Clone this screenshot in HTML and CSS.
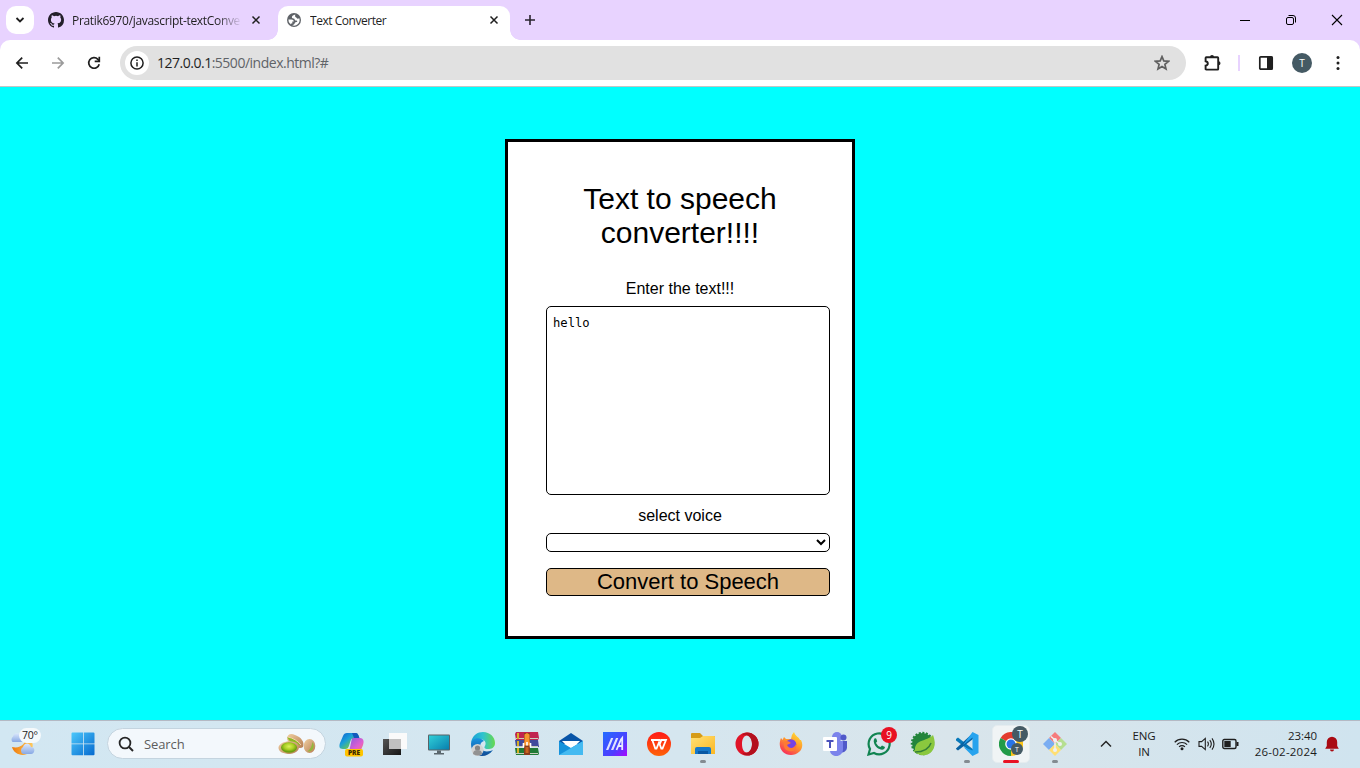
FILE: index.html
```
<!DOCTYPE html>
<html lang="en">
<head>
<meta charset="utf-8">
<title>Text Converter</title>
<link rel="stylesheet" href="styles.css">
</head>
<body>
<header class="tabstrip">
  <button class="tab-search"><svg width="10" height="10" viewBox="0 0 10 10"><path d="M1.500 3 5 6.500 8.500 3" fill="none" stroke="#1f1f1f" stroke-width="1.800"/></svg></button>
  <div class="tab">
    <svg class="favicon" width="16" height="16" viewBox="0 0 16 16"><path fill="#24202b" d="M8 0C3.580 0 0 3.580 0 8c0 3.540 2.290 6.530 5.470 7.590.4.070.550-.170.550-.380 0-.190-.010-.820-.010-1.490-2.010.370-2.530-.490-2.690-.940-.090-.230-.480-.940-.820-1.130-.280-.150-.680-.520-.010-.530.630-.010 1.080.580 1.230.820.720 1.210 1.870.870 2.330.660.070-.520.280-.870.510-1.070-1.780-.200-3.640-.890-3.640-3.950 0-.870.310-1.590.820-2.150-.080-.200-.360-1.020.080-2.120 0 0 .670-.210 2.200.820a7.600 7.600 0 0 1 4 0c1.530-1.040 2.200-.820 2.200-.820.440 1.100.160 1.920.080 2.120.510.560.820 1.270.820 2.150 0 3.070-1.870 3.750-3.650 3.950.290.250.540.730.540 1.480 0 1.070-.010 1.930-.010 2.200 0 .210.150.460.550.380A8.010 8.010 0 0 0 16 8c0-4.420-3.580-8-8-8z"/></svg>
    <span class="tab-title fade">Pratik6970/javascript-textConve</span>
    <svg class="tab-close" width="10" height="10" viewBox="0 0 10 10"><path d="m1.500 1.500 7 7m0-7-7 7" stroke="#1f1f1f" stroke-width="1.500"/></svg>
  </div>
  <div class="tab active">
    <svg class="favicon" width="14" height="14" viewBox="0 0 14 14"><circle cx="7" cy="7" r="7" fill="#5f6368"/><path d="M8.300 1.600C6.500 2 4.900 3 4.900 4.300c0 1.200 1.200 1.300 2.500 1.400.2 1.300.8 1.900 2 1.700 1 .1 1.300 1.200.2 1.500-1.500.1-2 .6-2 1.900-.6 1-1.700 1.200-2.400 1.500a5.600 5.600 0 0 0 7.100-7.100C11 6 10 5.800 9.600 4.700 8.300 4.500 7.800 3.600 8.300 1.600z" fill="#fff"/><path d="M1.400 6.500h3.100c1.500 0 2.200.7 2.300 2H5.300v1.900H3.800L3.700 11.500A5.600 5.600 0 0 1 1.400 6.500z" fill="#fff"/></svg>
    <span class="tab-title short">Text Converter</span>
    <svg class="tab-close" width="10" height="10" viewBox="0 0 10 10"><path d="m1.500 1.500 7 7m0-7-7 7" stroke="#1f1f1f" stroke-width="1.500"/></svg>
  </div>
  <svg class="new-tab" width="12" height="12" viewBox="0 0 12 12"><path d="M6 1v10M1 6h10" stroke="#28242f" stroke-width="1.600"/></svg>
  <div class="window-controls">
    <svg width="12" height="12" viewBox="0 0 12 12"><path d="M1 6.500h10" stroke="#000"/></svg>
    <svg width="12" height="12" viewBox="0 0 12 12"><rect x="1.500" y="3.500" width="7" height="7" rx="1.500" fill="none" stroke="#000"/><path d="M3.500 1.500H8a2.500 2.500 0 0 1 2.500 2.500v4.500" fill="none" stroke="#000"/></svg>
    <svg width="12" height="12" viewBox="0 0 12 12"><path d="m1 1 10 10M11 1 1 11" stroke="#000" stroke-width="1.100"/></svg>
  </div>
</header>

<nav class="toolbar">
  <div class="nav-buttons">
    <svg width="14" height="14" viewBox="0 0 14 14"><path d="M13 7H2m5.200-5.300L1.900 7l5.300 5.300" fill="none" stroke="#1f1f1f" stroke-width="1.700"/></svg>
    <svg width="14" height="14" viewBox="0 0 14 14"><path d="M1 7h11M6.800 1.700 12.100 7l-5.300 5.300" fill="none" stroke="#9b9b9b" stroke-width="1.700"/></svg>
    <svg width="14" height="14" viewBox="0 0 14 14"><path d="M12.200 8.200A5.300 5.300 0 1 1 10.900 3.300L12 4.600" fill="none" stroke="#1f1f1f" stroke-width="1.700"/><path d="M12.300.8v4.600H7.700" fill="none" stroke="#1f1f1f" stroke-width="1.700"/></svg>
  </div>
  <div class="omnibox">
    <span class="site-info"><svg width="14" height="14" viewBox="0 0 14 14"><circle cx="7" cy="7" r="6.100" fill="none" stroke="#1f1f1f" stroke-width="1.500"/><path d="M7 6.200v4.200M7 3.500v1.600" stroke="#1f1f1f" stroke-width="1.500"/></svg></span>
    <span class="url"><b>127.0.0.1</b>:5500/index.html?#</span>
    <svg class="star" width="16" height="16" viewBox="0 0 16 16"><path d="m8 1.600 1.800 4.300 4.700.4-3.600 3.100 1.100 4.600L8 11.500 4 14l1.100-4.600-3.600-3.100 4.700-.4z" fill="none" stroke="#606060" stroke-width="1.700"/></svg>
  </div>
  <div class="toolbar-actions">
    <svg width="18" height="18" viewBox="0 0 18 18"><path d="M2.300 3.200h11.200q.7 0 .7.700v11q0 .7-.7.700H2.300q-.7 0-.7-.7v-3.300q2.200-.4 2.200-2.200T1.600 7.200V3.900q0-.7.700-.7z" fill="none" stroke="#1f1f1f" stroke-width="1.900"/><path d="M6 3a2 2 0 0 1 4 0M14.500 7.300a2 2 0 0 1 0 4z" fill="#1f1f1f"/></svg>
    <i class="divider"></i>
    <svg class="panel" width="16" height="16" viewBox="0 0 16 16"><rect x="1.800" y="1.800" width="12.400" height="12.400" rx="1" fill="none" stroke="#1f1f1f" stroke-width="1.700"/><path d="M9 1.500h5.500v13H9z" fill="#1f1f1f"/></svg>
    <span class="avatar">T</span>
    <svg width="4" height="16" viewBox="0 0 4 16"><g fill="#1f1f1f"><circle cx="2" cy="2.600" r="1.500"/><circle cx="2" cy="8" r="1.500"/><circle cx="2" cy="13.400" r="1.500"/></g></svg>
  </div>
</nav>

<main class="page">
  <form class="converter">
    <h1>Text to speech converter!!!!</h1>
    <label for="text">Enter the text!!!</label>
    <textarea id="text" spellcheck="false">hello</textarea>
    <label for="voice">select voice</label>
    <select id="voice"></select>
    <button class="convert" type="button">Convert to Speech</button>
  </form>
</main>

<footer class="taskbar">
  <div class="weather">
    <svg width="32" height="30" viewBox="0 0 32 30"><defs><linearGradient id="moon" x2="1"><stop stop-color="#ef7b0a"/><stop offset="1" stop-color="#ffc95c"/></linearGradient><linearGradient id="cloud" y2="1" x2="0"><stop stop-color="#dce8fc"/><stop offset="1" stop-color="#87a8e4"/></linearGradient></defs><path d="M16 7c2 8-5 13-13 11 2 8 13 11 19 4 4-6 1-12-6-15z" fill="url(#moon)"/><path d="M3.500 13a3.700 3.700 0 0 1 .5-5.500C5 3 11 3 12 7.500c4 1 3 5.500 0 5.500z" fill="url(#cloud)"/><path d="M14 25a4 4 0 0 1 0-7c2-5 7-4 8 0 5 0 4 7 0 7z" fill="url(#cloud)"/></svg>
    <span class="temp">70°</span>
  </div>
  <svg class="start" width="24" height="24" viewBox="0 0 24 24"><defs><linearGradient id="win" x2="1" y2="1"><stop stop-color="#4cc8fb"/><stop offset="1" stop-color="#0569cf"/></linearGradient></defs><path fill="url(#win)" d="M1.500.5H12v11H.5v-10q0-1 1-1zM12.800.5h9.700q1 0 1 1v10H12.800zM.5 12.300H12v11H1.500q-1 0-1-1zM12.800 12.300h10.700v10q0 1-1 1h-9.700z"/></svg>
  <div class="search">
    <svg width="16" height="16" viewBox="0 0 16 16"><circle cx="7" cy="7" r="5.400" fill="none" stroke="#262626" stroke-width="1.800"/><path d="m11 11 4 4" stroke="#262626" stroke-width="2"/></svg>
    <span>Search</span>
    <svg class="nuts" width="38" height="22" viewBox="0 0 38 22"><defs><radialGradient id="nut" cy=".4"><stop stop-color="#dcf05a"/><stop offset=".6" stop-color="#a9cf24"/><stop offset="1" stop-color="#6c9f10"/></radialGradient><linearGradient id="shell" y2="1"><stop stop-color="#f0cfa2"/><stop offset="1" stop-color="#b57c50"/></linearGradient></defs><path d="M9 6C9 1 13 0 17 2c6 2 10 7 8 12-4 3-14-2-16-8z" fill="url(#shell)"/><path d="M9.500 4c4 0 10 4 13 8-6 0-12-3-13-8z" fill="#8dba24"/><path d="M10 4c5 1 10 4 13 8" fill="none" stroke="#f1d4a9"/><ellipse cx="31.500" cy="13" rx="5.800" ry="7" fill="url(#shell)"/><path d="M29.500 18.500c2.500-2 4.500-5 5-9.500 3 5 0 10-5 9.500z" fill="#91b83a"/><path d="M.5 14C2 8 15 6 20 11c3 5-1 9-8 10C6 21 0 19 .5 14z" fill="url(#shell)"/><ellipse cx="11" cy="14.500" rx="8" ry="5.200" fill="url(#nut)"/></svg>
  </div>
  <div class="apps">
    <span class="app"><svg width="26" height="26" viewBox="0 0 26 26"><defs><linearGradient id="coA" y2="1"><stop stop-color="#0d5ed2"/><stop offset=".4" stop-color="#1aa0d8"/><stop offset=".65" stop-color="#5cc06a"/><stop offset="1" stop-color="#ffd431"/></linearGradient><linearGradient id="coB" y2="1"><stop stop-color="#8b5ae0"/><stop offset=".6" stop-color="#e05fd0"/><stop offset="1" stop-color="#fb7f67"/></linearGradient></defs><path d="M14 7h8c4 0 4 4 3 7l-2 5q-1 2-3 2h-9z" fill="url(#coB)"/><path d="M9 2h8c3 0 3 1 4 5h-5c-2 0-3 1-3.500 3L10.500 16q-.7 2-3 2H5c-4 0-4-3-3-6l3-7q1-3 4-3z" fill="url(#coA)"/><path d="M14 2h3c3 0 3.500 2 4.500 5H16z" fill="#1358bd"/><rect x="7" y="18" width="18" height="7.500" rx="2" fill="#ffc400"/><text x="16" y="24.300" text-anchor="middle" class="pre">PRE</text></svg></span>
    <span class="app"><svg width="24" height="24" viewBox="0 0 24 24"><defs><linearGradient id="task" y2="1"><stop stop-color="#555"/><stop offset="1" stop-color="#161616"/></linearGradient></defs><path d="M0 7h18v16H0z" fill="url(#task)"/><path d="M6 1h18v16H6z" fill="#fafafa"/><path d="M6 7h12v10H6z" fill="#c0c0c0"/></svg></span>
    <span class="app"><svg width="24" height="24" viewBox="0 0 24 24"><defs><linearGradient id="screen" x2="1" y2="1"><stop stop-color="#30cfd8"/><stop offset="1" stop-color="#087fae"/></linearGradient></defs><rect x="1" y="2.500" width="22" height="16" rx="1" fill="#596267"/><path d="M2 3.500h20v14H2z" fill="url(#screen)"/><path d="M10 18.500h4V21h3v1.500H7V21h3z" fill="#5a666d"/></svg></span>
    <span class="app"><svg width="26" height="26" viewBox="0 0 26 26"><defs><linearGradient id="edgeA" x2="1"><stop stop-color="#199ed7"/><stop offset=".5" stop-color="#2fc3cf"/><stop offset="1" stop-color="#67d94e"/></linearGradient><linearGradient id="edgeB" y2="1" x2="0"><stop stop-color="#1994e1"/><stop offset="1" stop-color="#104c96"/></linearGradient></defs><path d="M1 12C2 4 8 1 13 1c7 0 12 5 12 11 0 5-4 6-7 6-4 0-4-2-3-3 2-4-1-7-5-7-4 0-7 1-9 4z" fill="url(#edgeA)"/><path d="M1 13c0-6 9-8 13-3-5 1-5 8 0 10 3 1 7 0 9-1-3 4-7 6-11 6C6 25 1 20 1 13z" fill="url(#edgeB)"/><circle cx="7.500" cy="19" r="6" fill="#d4d4d4"/><circle cx="7.500" cy="17" r="2.600" fill="#858585"/><path d="M3 23q0-4 4.500-4T12 23q-4 3-9 0z" fill="#929292"/></svg></span>
    <span class="app"><svg width="24" height="24" viewBox="0 0 24 24"><path d="M1 0h22l1 6-1 2H1L0 2z" fill="#c02450"/><path d="M0 8h23l1 7H1z" fill="#404b9c"/><path d="M0 16h23l1 6-1 1H1z" fill="#207a36"/><path d="M1 6.500h22M1 14.500h22M1 21.500h22" stroke="#c9cdbd"/><path d="M2 1h2v6H2zm0 8h2v5H2zm0 7h2v5H2z" fill="#d6af26"/><path d="M9 1h6v22H9z" fill="#8a3c1c"/><path d="M9.500 2.500 12 1l2.500 1.500v7l2 4H7.500l2-4z" fill="#f6952f"/><path d="M8.500 11v4.500M12 10v3.500M15.500 11v4.500" fill="none" stroke="#fff" stroke-width="1.600"/><path d="M10.500 15h3v6h-3z" fill="#c8641f"/></svg></span>
    <span class="app"><svg width="24" height="24" viewBox="0 0 24 24"><path d="M0 9 12 1l12 8v3H0z" fill="#0754a7"/><path d="M3 9h18l-9 9z" fill="#fff"/><path d="M0 9v14h24V9l-12 7z" fill="#1593dc"/><path d="m0 23 12-7 12-7v14z" fill="#44baf1"/></svg></span>
    <span class="app"><svg width="24" height="24" viewBox="0 0 24 24"><defs><linearGradient id="asus" x2="1" y2="1"><stop stop-color="#226dff"/><stop offset=".65" stop-color="#503bff"/><stop offset="1" stop-color="#aa08ff"/></linearGradient></defs><path d="M0 0h24v24H0z" fill="url(#asus)"/><path d="m3 18 5-12h2.300l-5 12zm5 0 5-12h2.300l-5 12z" fill="#dfe3ff"/><path d="M13.500 18 18 7.500l1.200-1.500V18m-3.700-4h3" fill="none" stroke="#e8eaff" stroke-width="1.800"/></svg></span>
    <span class="app"><svg width="24" height="24" viewBox="0 0 24 24"><defs><linearGradient id="wps" y2="1" x2="0"><stop stop-color="#ff1b16"/><stop offset="1" stop-color="#ff6208"/></linearGradient></defs><circle cx="12" cy="12" r="12" fill="url(#wps)"/><path d="M4 8h9.500M5.300 8l3 8.500h1.200L12 10.500l2.300 6h1.200L19 8h-4.500L12.800 12" fill="none" stroke="#fff" stroke-width="1.800"/></svg></span>
    <span class="app running"><svg width="24" height="24" viewBox="0 0 24 24"><defs><linearGradient id="folder" x2="1" y2="1"><stop stop-color="#ffe176"/><stop offset="1" stop-color="#fcb722"/></linearGradient></defs><path d="M1 1h8l3 3h11q1 0 1 1v5H0V2q0-1 1-1z" fill="#d69c18"/><path d="M0 6h9l3-2h11q1 0 1 1v17H0z" fill="url(#folder)"/><path d="M4 22v-5q0-2 2-2h12q2 0 2 2v5z" fill="#1678c9"/><path d="M7 19h10v3H7z" fill="#0858a4"/></svg></span>
    <span class="app"><svg width="24" height="24" viewBox="0 0 24 24"><path d="M12 .5a11.500 11.500 0 1 0 0 23 11.500 11.500 0 0 0 0-23zm0 3c3 0 5 3.500 5 8.500s-2 8.500-5 8.500-5-3.500-5-8.500 2-8.500 5-8.500z" fill="#e01428" fill-rule="evenodd"/><path d="M12 .5a11.500 11.500 0 0 1 0 23c-2 0-4-1-5-3 2 1 5 1 7-1 2-2 3-4 3-7.500S16 6.500 14 4.500c-2-2-5-2-7-1 1-2 3-3 5-3z" fill="#b3101e"/></svg></span>
    <span class="app"><svg width="24" height="24" viewBox="0 0 24 24"><defs><linearGradient id="fox" x1=".8" x2=".2" y2="1"><stop stop-color="#ffe135"/><stop offset=".45" stop-color="#ff9a2b"/><stop offset="1" stop-color="#f7255d"/></linearGradient></defs><path d="M2 6q1 1 1.500 2L5 5l2 2h5q0-4 3-7c1 4 5 5 6 8l1 0c4 8-2 15-10 15S-2 16 2 6z" fill="url(#fox)"/><circle cx="12" cy="12.500" r="5.300" fill="#7542e5"/><path d="M5 10c2-2 5-1 7 1l-4 2c2 4 7 4 9-1 1 5-2 8-6 7-5 0-7-4-6-9z" fill="#ff7a33"/></svg></span>
    <span class="app"><svg width="26" height="26" viewBox="0 0 26 26"><circle cx="15" cy="6" r="5" fill="#7b83eb"/><circle cx="21.500" cy="6.500" r="3" fill="#5059c9"/><path d="M18 10h7v7a5 5 0 0 1-7 4z" fill="#5059c9"/><path d="M8 10h13v8c0 9-12 9-13 2z" fill="#7b83eb"/><rect x="1" y="6" width="14" height="14" rx="1" fill="#fff"/><path d="M4.500 10h7M8 10v7" stroke="#4b53bc" stroke-width="2"/></svg></span>
    <span class="app"><svg width="24" height="24" viewBox="0 0 24 24"><path d="M1.500 22.500 3 17a10.500 10.500 0 1 1 4 4z" fill="none" stroke="#118451" stroke-width="2.200"/><path d="M7.500 6.500c2-1 2 1 2.700 2.700L9 11q1.500 3 4.500 4l1.500-1.400 3 1.500c-.5 3-3 3-5.500 2C9 16 5 10 7.500 6.500z" fill="#118451"/></svg><em class="count">9</em></span>
    <span class="app"><svg width="26" height="26" viewBox="0 0 26 26"><circle cx="12.500" cy="12.500" r="10.500" fill="#23853b" stroke="#23853b" stroke-width="2.500" stroke-dasharray="2 1.500"/><path d="M5 19C5 8 16 11 23 4c6 15-5 25-17 18-2-1-3-2-1-3z" fill="#8ac83e"/><path d="M5 21c8 0 14-3 16-9" fill="none" stroke="#337f38" stroke-width="1.500"/></svg></span>
    <span class="app running"><svg width="24" height="24" viewBox="0 0 24 24"><path d="m1 7 2-1.500L19 18v4L1 8.500z" fill="#0879ba"/><path d="M1 16.500 18 1v6L3 18.500 1 17z" fill="#0862a3"/><path d="m17.500 0 6 3v18l-6 3-9-9 9 3.500V5.500L8 13z" fill="#27a3ee"/></svg></span>
    <span class="app running current"><svg width="24" height="24" viewBox="0 0 24 24"><path d="M12 12 1.600 6A12 12 0 0 1 22.400 6z" fill="#e33b2e"/><path d="M12 12v12A12 12 0 0 1 1.600 6z" fill="#229b48"/><path d="M12 12 22.400 6A12 12 0 0 1 12 24z" fill="#fcc419"/><circle cx="12" cy="12" r="5.800" fill="#fff"/><circle cx="12" cy="12" r="4.500" fill="#2874e8"/></svg><em class="profile large">T</em><em class="profile">T</em></span>
    <span class="app running"><svg width="26" height="26" viewBox="0 0 26 26"><path d="m13 1 6 6-6 6-6-6z" fill="#f67b7c"/><path d="m7 7 6 6-6 6-6-6z" fill="#7aadf2"/><path d="m19 7 6 6-6 6-6-6z" fill="#b6df91"/><path d="m13 13 6 6-6 6-6-6z" fill="#ffdf73"/><path d="M9 5.500 13 9v11M13 9l5 4" fill="none" stroke="#eef1f2" stroke-width="1.500"/><g fill="#eef1f2"><circle cx="13" cy="9" r="2"/><circle cx="13" cy="19" r="2"/><circle cx="18" cy="13" r="2"/></g></svg></span>
  </div>
  <div class="tray">
    <svg class="chevron" width="12" height="8" viewBox="0 0 12 8"><path d="m1 6.500 5-5 5 5" fill="none" stroke="#262626" stroke-width="1.500"/></svg>
    <span class="lang">ENG<br>IN</span>
    <svg class="wifi" width="16" height="14" viewBox="0 0 16 14"><g fill="none" stroke="#1f1f1f" stroke-width="1.200"><path d="M.7 5.200a10.400 10.400 0 0 1 14.600 0M2.900 7.600a7.200 7.200 0 0 1 10.200 0M5.100 9.800a4.100 4.100 0 0 1 5.800 0"/></g><circle cx="8" cy="11.700" r="1.500" fill="#1f1f1f"/></svg>
    <svg class="sound" width="17" height="14" viewBox="0 0 17 14"><g fill="none" stroke="#1f1f1f" stroke-width="1.100"><path d="M1 4.600h2.600l3.700-3.200v11.200L3.600 9.400H1zM9.500 4.700q1.800 2.300 0 4.600M11.800 3.100q3 3.900 0 7.800M14 1.400q4 5.600 0 11.200"/></g></svg>
    <svg class="battery" width="17" height="12" viewBox="0 0 17 12"><rect x=".8" y="1.500" width="13.200" height="9" rx="1.500" fill="none" stroke="#1f1f1f" stroke-width="1.400"/><path d="M2.300 3h6.400v6H2.300zM14.500 4h2v4h-2z" fill="#1f1f1f"/></svg>
    <span class="clock">23:40<br><span class="date">26-02-2024</span></span>
    <svg class="bell" width="14" height="16" viewBox="0 0 14 16"><path d="M1.800 10V6a5.200 5.200 0 0 1 10.400 0v4l1.600 2.800H.2z" fill="#a90a12"/><path d="M5 13.500h4a2 2 0 0 1-4 0z" fill="#a90a12"/></svg>
  </div>
</footer>
</body>
</html>
```
FILE: styles.css
```
* { box-sizing: border-box; }
svg { display: block; flex: none; }

body {
  margin: 0;
  height: 768px;
  overflow: hidden;
  display: grid;
  grid-template-rows: 40px 47px 633px 48px;
  background: #e8d3ff;
  font-family: "Open Sans", "Noto Sans", sans-serif;
}

/* Tabs */
.tabstrip { display: flex; align-items: flex-end; padding-left: 6px; background: #e8d3ff; }
.tab-search {
  display: grid; place-items: center;
  width: 28px; height: 28px; margin-bottom: 6px; padding: 0;
  border: 0; border-radius: 10px; background: #fff;
}
.tab { display: flex; align-items: center; width: 244px; height: 34px; padding: 0 17px 6px 14px; }
.tab.active {
  position: relative; width: 232px; padding: 0 11px 6px 9px;
  border-radius: 10px 10px 0 0; background: #fff;
}
.tab.active::before, .tab.active::after {
  content: ""; position: absolute; bottom: 0; width: 10px; height: 10px;
}
.tab.active::before { left: -10px; background: radial-gradient(circle at 0 0, transparent 9.500px, #fff 10px); }
.tab.active::after { right: -10px; background: radial-gradient(circle at 100% 0, transparent 9.500px, #fff 10px); }
.tab-title { margin-left: 8px; width: 168px; padding-top: 1px; overflow: hidden; white-space: nowrap; color: #1f1f1f; font-size: 12px; line-height: 18px; letter-spacing: -0.320px; }
.tab-title.short { letter-spacing: -0.460px; margin-left: 9px; }
.fade { -webkit-mask-image: linear-gradient(to right, #000 145px, transparent 170px); mask-image: linear-gradient(to right, #000 145px, transparent 170px); }
.tab-close { margin-left: auto; }
.new-tab { margin: 0 0 14px 14px; }
.window-controls { display: flex; gap: 34px; margin: 0 17px 14px auto; }

/* Toolbar */
.toolbar {
  display: flex; align-items: center;
  border-bottom: 1px solid #c4c4c4; border-radius: 10px 10px 0 0;
  background: #fff;
}
.nav-buttons { display: flex; gap: 22px; padding-left: 15px; }
.omnibox {
  display: flex; align-items: center;
  width: 1066px; height: 34px; margin-left: 19px; padding: 0 16px 0 5px;
  border-radius: 17px; background: #e1e1e1;
}
.site-info { display: grid; place-items: center; width: 24px; height: 24px; border-radius: 50%; background: #fff; }
.url { margin-left: 8px; color: #5f6368; font-size: 14px; line-height: 20px; letter-spacing: -0.490px; }
.url b { color: #1f1f1f; font-weight: 400; }
.star { margin-left: auto; }
.toolbar-actions { display: flex; align-items: center; padding-left: 18px; }
.divider { width: 2px; height: 16px; margin: 0 18px 0 16px; background: #e8d3ff; }
.avatar {
  display: grid; place-items: center;
  width: 20px; height: 20px; margin: 0 24px 0 18px;
  border-radius: 50%; background: #455a64; color: #fff; font-size: 10px;
}

/* Converter page */
.page { padding-top: 52px; background: #0ff; }
.converter {
  display: flex; flex-direction: column;
  width: 350px; height: 500px; margin: 0 auto; padding: 40px 22px 0 38px;
  border: 3px solid #000; background: #fff;
  font-family: "Liberation Sans", Arial, sans-serif;
}
.converter h1 { margin: 0 16px 29px 0; font-size: 30px; font-weight: 400; line-height: 34px; text-align: center; }
.converter label { margin-right: 16px; color: #000; font-size: 16px; line-height: 20px; text-align: center; }
.converter textarea, .converter select, .convert {
  width: 284px; border: 1px solid #000; border-radius: 5px; align-self: flex-start;
}
.converter textarea {
  height: 189px; margin: 7px 0 11px; padding: 8px 6px; resize: none; overflow: hidden; outline: 0;
  color: #000; font: 12.200px/16px "DejaVu Sans Mono", monospace;
}
.converter textarea, .converter select { background: #fff; }
.converter select { height: 19px; margin: 7px 0 16px; font-size: 13.333px; }
.convert { height: 28px; padding: 0; background: #deb887; color: #000; font: 22px/24px "Liberation Sans", Arial, sans-serif; }

/* Taskbar */
.taskbar {
  display: flex; align-items: center; padding-bottom: 2px;
  border-top: 1px solid #b4b9c4;
  background: linear-gradient(90deg, #d2e7f2, #d5e6ef 50%, #d9e5eb 70%, #d0e4ef);
}
.weather { position: relative; width: 33px; margin-left: 9px; }
.temp {
  position: absolute; left: 10px; top: -1px;
  padding: 0 3px 0 3px; border-radius: 8px; background: #f4f9fb;
  color: #1c1c1c; font-size: 10.500px; line-height: 15px; letter-spacing: -0.300px;
}
.start { margin-left: 29px; }
.search {
  display: flex; align-items: center;
  width: 219px; height: 31px; margin-left: 12px; padding: 0 9px 0 10px;
  border: 1px solid #c4d4df; border-radius: 16px; background: #f3f8fc;
  color: #5d5d5d; font-size: 13px;
}
.search span { margin-left: 10px; letter-spacing: -0.100px; }
.nuts { margin-left: auto; }
.apps { display: flex; height: 45px; margin-left: 3px; }
.app { position: relative; display: grid; place-items: center; width: 44px; height: 45px; }
.pre { font: 800 6.500px "Open Sans", sans-serif; fill: #3b2a00; }
.running::after {
  content: ""; position: absolute; left: 19px; bottom: 3px;
  width: 6px; height: 3px; border-radius: 2px; background: #838b91;
}
.current::before {
  content: ""; position: absolute; inset: 4px 3px 3px;
  border: 1px solid #e5ecef; border-radius: 5px; background: #f0f4f5;
}
.current svg { position: relative; }
.current::after { left: 14px; width: 16px; background: #e81123; }
.count, .profile {
  position: absolute; display: grid; place-items: center;
  border-radius: 50%; color: #fff; font-style: normal;
}
.count { left: 24px; top: 6px; width: 16px; height: 16px; background: #e81123; font-size: 10px; }
.profile { left: 22px; top: 22px; width: 12px; height: 12px; background: #455a64; font-size: 7px; }
.profile.large { left: 23px; top: 5px; width: 16px; height: 16px; font-size: 10px; }
.tray { display: flex; align-items: center; flex: 1; height: 45px; padding-right: 21px; color: #1b1b1b; font-size: 11.500px; line-height: 16px; }
.chevron { margin-left: 23px; }
.lang { width: 44px; margin-left: 10px; text-align: center; letter-spacing: -0.100px; }
.wifi { margin-left: 8px; }
.sound { margin-left: 8px; }
.battery { margin-left: 7px; }
.clock { flex: 1; text-align: right; letter-spacing: -0.050px; white-space: nowrap; }
.date { letter-spacing: 0.220px; }
.bell { margin-left: 8px; }
```
